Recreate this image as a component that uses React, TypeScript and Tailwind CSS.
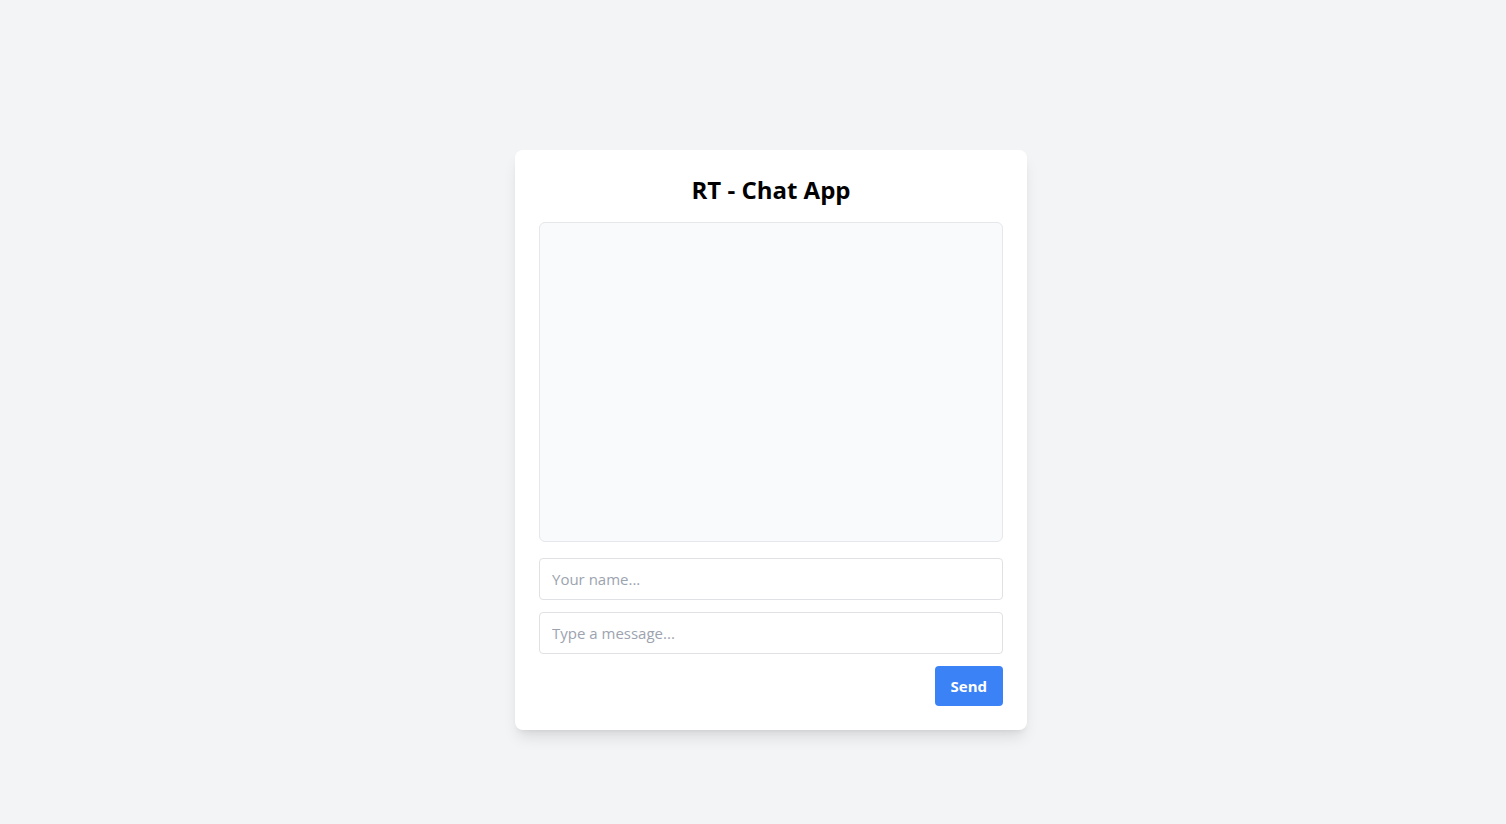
export default function App() {
    return (
        <div className="min-h-screen bg-[#f3f4f6] pl-9 pt-[150px]" style={{ fontFamily: '"Open Sans", "Noto Sans", sans-serif' }}>
            <div className="mx-auto w-full max-w-lg rounded-lg bg-white p-6 shadow-lg">
                <h1 className="mb-4 text-center text-2xl font-bold text-black">RT - Chat App</h1>
                <div className="mb-4 h-80 overflow-y-auto rounded-md border border-[#e5e7eb] bg-[#f9fafb]"></div>
                <input
                    type="text"
                    placeholder="Your name..."
                    className="mb-3 block w-full rounded border border-[#dfe1e5] px-3 py-2 text-[15px] leading-6 placeholder:text-[#9ca3af] focus:outline-none"
                />
                <input
                    type="text"
                    placeholder="Type a message..."
                    className="mb-3 block w-full rounded border border-[#dfe1e5] px-3 py-2 text-[15px] leading-6 placeholder:text-[#9ca3af] focus:outline-none"
                />
                <div className="flex justify-end">
                    <button className="rounded bg-[#3b82f6] px-4 py-2 text-[15px] leading-6 font-bold text-white hover:bg-[#2563eb]">Send</button>
                </div>
            </div>
        </div>
    );
}
